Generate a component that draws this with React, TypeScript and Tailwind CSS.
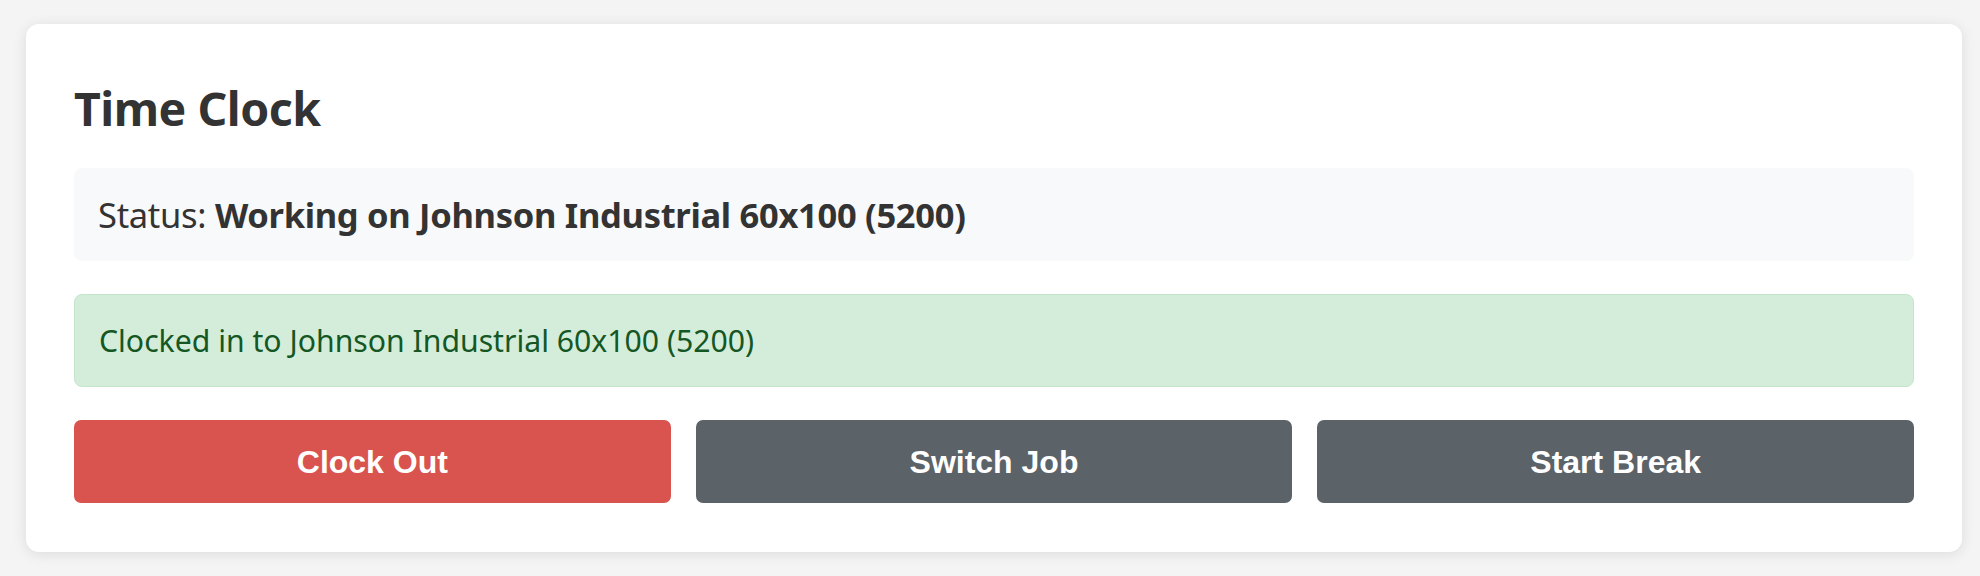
export default function App() {
  return (
    <div className="min-h-[576px] bg-[#f4f4f4] pl-[26px] pr-[18px] py-[24px]" style={{ fontFamily: '"Noto Sans", "Open Sans", sans-serif' }}>
      <div className="bg-white rounded-[13px] shadow-[0_2px_14px_rgba(0,0,0,0.10)] px-[48px] pt-[48px] pb-[49px]">
        <h2 className="text-[46.5px] leading-[60px] pt-[6px] font-bold text-[#333333] mb-[30px] tracking-[-0.5px]">Time Clock</h2>
        <div className="h-[93px] flex items-center px-[24px] bg-[#f8f9fa] rounded-[8px] text-[34.5px] text-[#333333] tracking-[-0.3px]">
          <span>Status:&nbsp;</span>
          <strong className="font-bold">Working on Johnson Industrial 60x100 (5200)</strong>
        </div>
        <div className="mt-[33px] h-[93px] flex items-center px-[24px] bg-[#d4edda] border border-[#c3e6cb] rounded-[8px] text-[30.2px] text-[#155724]">
          Clocked in to Johnson Industrial 60x100 (5200)
        </div>
        <div className="mt-[33px] grid grid-cols-3 gap-[25px]">
          <button className="h-[83px] rounded-[7px] bg-[#d9534f] text-white text-[32px] font-bold" style={{ fontFamily: '"Liberation Sans", Arial, sans-serif' }}>Clock Out</button>
          <button className="h-[83px] rounded-[7px] bg-[#5b6268] text-white text-[32px] font-bold" style={{ fontFamily: '"Liberation Sans", Arial, sans-serif' }}>Switch Job</button>
          <button className="h-[83px] rounded-[7px] bg-[#5b6268] text-white text-[32px] font-bold" style={{ fontFamily: '"Liberation Sans", Arial, sans-serif' }}>Start Break</button>
        </div>
      </div>
    </div>
  );
}
